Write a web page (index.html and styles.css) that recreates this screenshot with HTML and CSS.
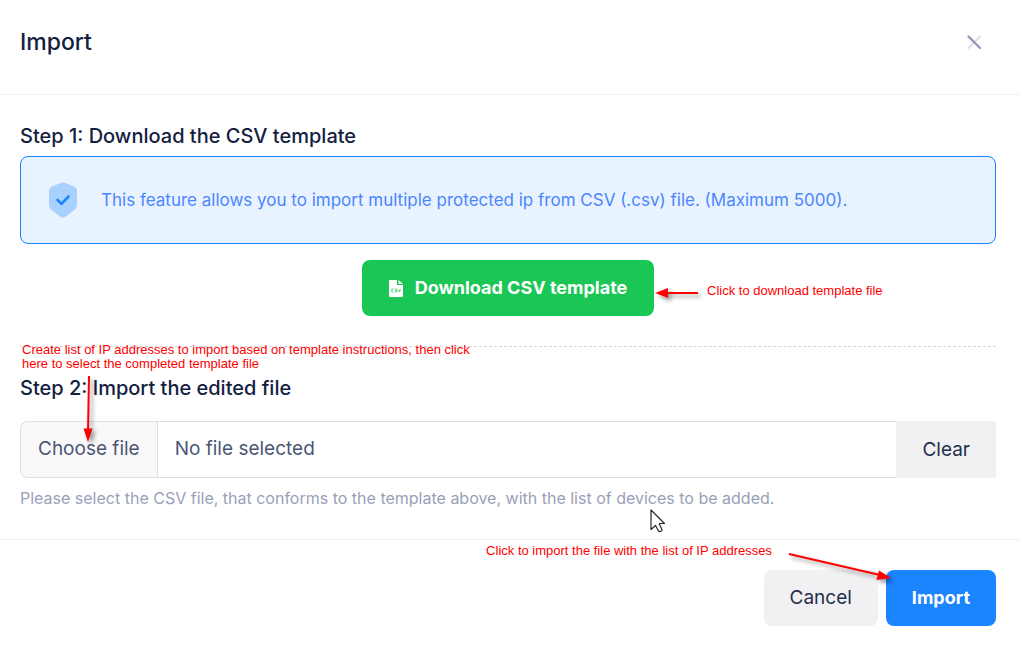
FILE: index.html
```html
<!DOCTYPE html>
<html lang="en">
<head>
<meta charset="utf-8">
<meta name="viewport" content="width=device-width, initial-scale=1">
<title>Import</title>
<link rel="stylesheet" href="styles.css">
</head>
<body>
<main class="modal">
  <header class="modal-header">
    <h1 class="modal-title">Import</h1>
    <button class="close" type="button" aria-label="Close">
      <svg width="16" height="16" viewBox="0 0 16 16" fill="none" stroke-width="2.400" stroke-linecap="round">
        <path d="M14 2.500 2.500 14" stroke="#dfe2eb"/>
        <path d="m2.500 2.500 11.500 11.500" stroke="#8f9ab6"/>
      </svg>
    </button>
  </header>

  <div class="modal-body">
    <section class="step">
      <h2 class="step-title">Step 1: Download the CSV template</h2>
      <div class="alert">
        <svg class="alert-icon" width="30" height="36" viewBox="0 0 30 36">
          <path d="M13.300 .8Q15 0 16.700 .8L26.500 4.800Q29 6 29 8.500V23Q29 25.500 27 27.500L18 34.500Q15 36.500 12 34.500L3 27.500Q1 25.500 1 23V8.500Q1 6 3.500 4.800Z" fill="#a9d1ff"/>
          <path d="m9.500 18 4 3.800 7-7.300" fill="none" stroke="#1b84ff" stroke-width="2.600" stroke-linecap="round" stroke-linejoin="round"/>
        </svg>
        <p class="alert-text">This feature allows you to import multiple protected ip from CSV (.csv) file. (Maximum 5000).</p>
      </div>
      <div class="download-row">
        <button class="btn btn-success" type="button">
          <svg width="14" height="17" viewBox="0 0 14 17">
            <path d="M1 0H8V5H14V16Q14 17 13 17H1Q0 17 0 16V1Q0 0 1 0Z" fill="#fff"/>
            <path d="M9.500 0 14 4H9.500Z" fill="#fff"/>
            <path d="M4.800 9H2.800V12H4.800M8.200 9H6.300V10.500H8.200V12H6.300M9.500 9l1 3 1-3" fill="none" stroke="#17c653" stroke-width=".7"/>
          </svg>
          Download CSV template
        </button>
        <p class="note note-download">Click to download template file</p>
        <svg class="arrow arrow-download" width="50" height="20" viewBox="0 0 50 20">
          <path d="M44 10H10" stroke="#f00" stroke-width="2"/>
          <path d="M1 10 14 5V15Z" fill="#f00"/>
        </svg>
      </div>
    </section>

    <section class="step step-file">
      <p class="note note-select">Create list of IP addresses to import based on template instructions, then click<br>here to select the completed template file</p>
      <h2 class="step-title">Step 2: Import the edited file</h2>
      <div class="file-group">
        <input class="file-input" type="file" id="csv-file" accept=".csv">
        <label class="file-label" for="csv-file">
          <span class="file-choose">Choose file</span>
          <span class="file-name">No file selected</span>
        </label>
        <button class="file-clear" type="button">Clear</button>
      </div>
      <svg class="arrow arrow-select" width="20" height="74" viewBox="0 0 20 74">
        <path d="M11 2 10 58" stroke="#f00" stroke-width="2"/>
        <path d="M5.500 54.500H14.500L10 68Z" fill="#f00"/>
      </svg>
      <p class="help">Please select the CSV file, that conforms to the template above, with the list of devices to be added.</p>
      <svg class="cursor" width="16" height="24" viewBox="0 0 16 24">
        <path d="M1 1V20.500L5.500 16.500 8.500 22Q9.500 23 11 22.300T12 20.500L9.500 15.500V14.500H14.500Z" fill="#fff" stroke="#24262e" stroke-width="1.200" stroke-linejoin="round"/>
      </svg>
    </section>
  </div>

  <footer class="modal-footer">
    <p class="note note-import">Click to import the file with the list of IP addresses</p>
    <button class="btn btn-light" type="button">Cancel</button>
    <button class="btn btn-primary" type="button">Import</button>
    <svg class="arrow arrow-import" width="104" height="32" viewBox="0 0 104 32">
      <path d="M1 3 92 24" stroke="#f00" stroke-width="2"/>
      <path d="M103 27 88.500 29 91 19.500Z" fill="#f00"/>
    </svg>
  </footer>
</main>
</body>
</html>
```

FILE: styles.css
```css
* { box-sizing: border-box; }

body {
  margin: 0;
  background: #fff;
  color: #14203f;
  font-family: Inter, "Liberation Sans", sans-serif;
  font-size: 19px;
  line-height: 24px;
}

h1, h2, p { margin: 0; }

button {
  border: 0;
  font: inherit;
  cursor: pointer;
}

.modal-header {
  display: flex;
  align-items: center;
  justify-content: space-between;
  padding: 26px 38px 36px 20px;
  border-bottom: 1px solid #f1f1f4;
}

.modal-title {
  font-size: 23px;
  font-weight: 500;
  line-height: 32px;
}

.close {
  display: flex;
  padding: 0;
  background: none;
}

.modal-body { padding: 29px 24px 29px 20px; }

.step-title {
  font-size: 20px;
  font-weight: 500;
}

.alert {
  display: flex;
  align-items: center;
  gap: 23px;
  min-height: 88px;
  margin-top: 8px;
  padding: 16px 27px;
  border: 1px solid #1b84ff;
  border-radius: 8px;
  background: #e9f3ff;
}

.alert-icon { flex: none; }

.alert-text {
  color: #4b86ff;
  font-size: 17px;
}

.download-row {
  position: relative;
  display: flex;
  justify-content: center;
  padding: 16px 0 30px;
}

.btn {
  display: flex;
  align-items: center;
  gap: 12px;
  padding: 16px 26px;
  border-radius: 8px;
}

.btn-success {
  padding: 16px 27px;
  background: #1bc754;
  color: #fff;
  font-size: 18px;
  font-weight: 700;
}

.btn-light {
  background: #f1f1f4;
  color: #252f4a;
}

.btn-primary {
  background: #1b84ff;
  color: #fff;
  font-size: 18px;
  font-weight: 700;
}

.step-file {
  position: relative;
  padding-top: 29px;
  border-top: 1px dashed #d4d6dc;
}

.file-group {
  position: relative;
  display: flex;
  margin-top: 21px;
}

.file-input {
  position: absolute;
  inset: 0;
  width: 100%;
  opacity: 0;
}

.file-label {
  position: relative;
  display: flex;
  flex: 1;
  border: 1px solid #dbdfe9;
  border-right: 0;
  border-radius: 8px 0 0 8px;
  background: #fff;
  color: #4b5675;
  cursor: pointer;
}

.file-choose,
.file-name { padding: 15px 17px 16px; }

.file-choose {
  border-right: 1px solid #dbdfe9;
  border-radius: 8px 0 0 8px;
  background: #f9f9f9;
}

.file-clear {
  position: relative;
  padding: 16px 26px;
  background: #f1f1f4;
  color: #252f4a;
}

.help {
  margin-top: 8px;
  color: #99a1b7;
  font-size: 16px;
}

.modal-footer {
  position: relative;
  display: flex;
  justify-content: flex-end;
  gap: 8px;
  padding: 30px 24px 19px 20px;
  border-top: 1px solid #f1f1f4;
}

.note {
  position: absolute;
  color: #f00;
  font-family: "Liberation Sans", Arial, sans-serif;
  font-size: 13px;
  line-height: 14px;
  white-space: nowrap;
}

.arrow {
  position: absolute;
  overflow: visible;
  filter: drop-shadow(3px 3px 2px rgba(0, 0, 0, .4));
  pointer-events: none;
}

.note-download {
  top: 40px;
  left: calc(50% + 199px);
}

.arrow-download {
  top: 39px;
  left: calc(50% + 146px);
}

.note-select {
  top: -4px;
  left: 2px;
}

.arrow-select {
  top: 27px;
  left: 58px;
}

.cursor {
  position: absolute;
  top: 162px;
  left: 630px;
  pointer-events: none;
}

.note-import {
  top: 4px;
  right: 248px;
}

.arrow-import {
  top: 11px;
  right: 128px;
}
```
